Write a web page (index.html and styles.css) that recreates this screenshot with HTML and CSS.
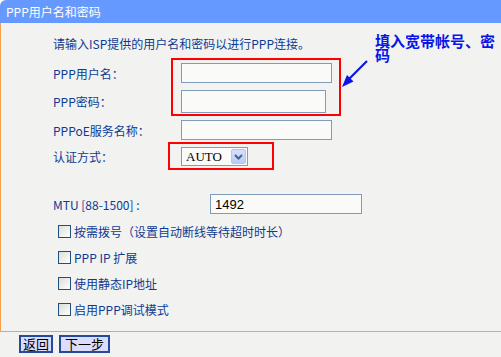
FILE: index.html
```html
<!DOCTYPE html>
<html lang="zh-CN">
<head>
    <meta charset="UTF-8">
    <title>PPP用户名和密码</title>
    <link rel="stylesheet" href="styles.css">
</head>
<body>
    <div class="page">
        <div class="header">PPP用户名和密码</div>
        <div class="panel">
            <p class="intro">请输入ISP提供的用户名和密码以进行PPP连接。</p>

            <div class="field-row first">
                <span class="label">PPP用户名：</span>
                <input type="text" class="text">
            </div>
            <div class="field-row">
                <span class="label">PPP密码：</span>
                <input type="password" class="text pwd">
            </div>
            <div class="field-row">
                <span class="label">PPPoE服务名称：</span>
                <input type="text" class="text">
            </div>
            <div class="field-row select-row">
                <span class="label">认证方式：</span>
                <div class="select">
                    <span class="select-value">AUTO</span>
                    <span class="select-btn">
                        <svg width="9" height="6" viewBox="0 0 9 6"><path d="M1 1 L4.5 4.5 L8 1" fill="none" stroke="#4a5f8a" stroke-width="2"/></svg>
                    </span>
                </div>
            </div>

            <div class="field-row mtu-row">
                <span class="label mtu-label">MTU [88-1500] :</span>
                <input type="text" class="text mtu" value="1492">
            </div>

            <div class="check-list">
                <label class="check"><input type="checkbox"><span>按需拨号（设置自动断线等待超时时长）</span></label>
                <label class="check"><input type="checkbox"><span>PPP IP 扩展</span></label>
                <label class="check"><input type="checkbox"><span>使用静态IP地址</span></label>
                <label class="check"><input type="checkbox"><span>启用PPP调试模式</span></label>
            </div>

            <!-- annotation overlay -->
            <div class="mark mark-account"></div>
            <div class="mark mark-auth"></div>
            <div class="note">填入宽带帐号、密码</div>
            <svg class="arrow" width="40" height="40" viewBox="335 55 40 40">
                <line x1="367" y1="61" x2="349" y2="79" stroke="#0a14e6" stroke-width="2.2"/>
                <polygon points="342,87 353.5,81.5 347,75" fill="#0a14e6"/>
            </svg>
        </div>
        <div class="footer">
            <button class="btn btn-back">返回</button>
            <button class="btn btn-next">下一步</button>
        </div>
    </div>
</body>
</html>
```
FILE: styles.css
```css
* {
    box-sizing: border-box;
}

html, body {
    margin: 0;
    padding: 0;
    background: #fff;
}

body {
    width: 501px;
    height: 357px;
    overflow: hidden;
    font-family: "Noto Sans CJK SC", sans-serif;
    font-size: 12px;
}

.page {
    height: 357px;
    background: #f2f2f0;
    border-top-left-radius: 6px;
}

.header {
    height: 23px;
    line-height: 23px;
    padding-left: 6px;
    background: #6699ff;
    color: #fff;
    border-top-left-radius: 6px;
}

.panel {
    position: relative;
    height: 309px;
    padding: 13px 0 0 52px;
    border-left: 1px solid #f5a04a;
    border-bottom: 1px solid #f5a04a;
    color: #0d3b93;
}

.intro {
    margin: 0;
    line-height: 16px;
}

.field-row {
    display: flex;
    align-items: center;
    margin-top: 7px;
}

.field-row.first {
    margin-top: 11px;
}

.label {
    width: 128px;
    flex-shrink: 0;
}

.text {
    width: 151px;
    height: 20px;
    margin: 0;
    padding: 0 3px;
    border: 1px solid #7f9db9;
    background: #fafaf8;
    font-family: "Liberation Sans", sans-serif;
    font-size: 13px;
    color: #000;
}

.pwd {
    width: 145px;
    height: 23px;
}

.select-row {
    margin-top: 7px;
}

.select {
    display: flex;
    align-items: center;
    width: 67px;
    height: 19px;
    padding: 1px;
    border: 1px solid #7f9db9;
    background: #fafaf8;
}

.select-value {
    flex: 1;
    padding-left: 3px;
    font-family: "Liberation Serif", serif;
    font-size: 13px;
    color: #000;
}

.select-btn {
    display: flex;
    align-items: center;
    justify-content: center;
    width: 15px;
    height: 15px;
    border-radius: 2px;
    background: linear-gradient(#d4e0fc, #b9cbf7);
    border: 1px solid #b4c6f2;
}

.mtu-row {
    margin-top: 28px;
}

.mtu-label {
    width: 157px;
}

.mtu {
    width: 152px;
    padding-left: 4px;
}

.check-list {
    display: flex;
    flex-direction: column;
    gap: 10px;
    margin-top: 9px;
    padding-left: 5px;
}

.check {
    display: flex;
    align-items: center;
    height: 16px;
}

.check input {
    appearance: none;
    -webkit-appearance: none;
    width: 13px;
    height: 13px;
    margin: 0 3px 0 0;
    border: 1px solid #1c5180;
    background: linear-gradient(135deg, #dcdcd7, #fff);
}

/* annotation */
.mark {
    position: absolute;
    border: 2px solid #ff0000;
}

.mark-account {
    left: 170px;
    top: 35px;
    width: 170px;
    height: 58px;
}

.mark-auth {
    left: 167px;
    top: 119px;
    width: 106px;
    height: 28px;
}

.note {
    position: absolute;
    left: 374px;
    top: 11px;
    width: 124px;
    font-size: 15px;
    font-weight: bold;
    line-height: 14px;
    color: #0a14e6;
}

.arrow {
    position: absolute;
    left: 334px;
    top: 32px;
}

.footer {
    display: flex;
    gap: 6px;
    padding: 3px 0 0 19px;
}

.btn {
    height: 18px;
    padding: 0;
    border: 2px solid #254a9c;
    background: #dcdcfc;
    font-family: "Noto Sans CJK SC", sans-serif;
    font-size: 13px;
    line-height: 12px;
    color: #000;
}

.btn-back {
    width: 34px;
}

.btn-next {
    width: 51px;
}
```
